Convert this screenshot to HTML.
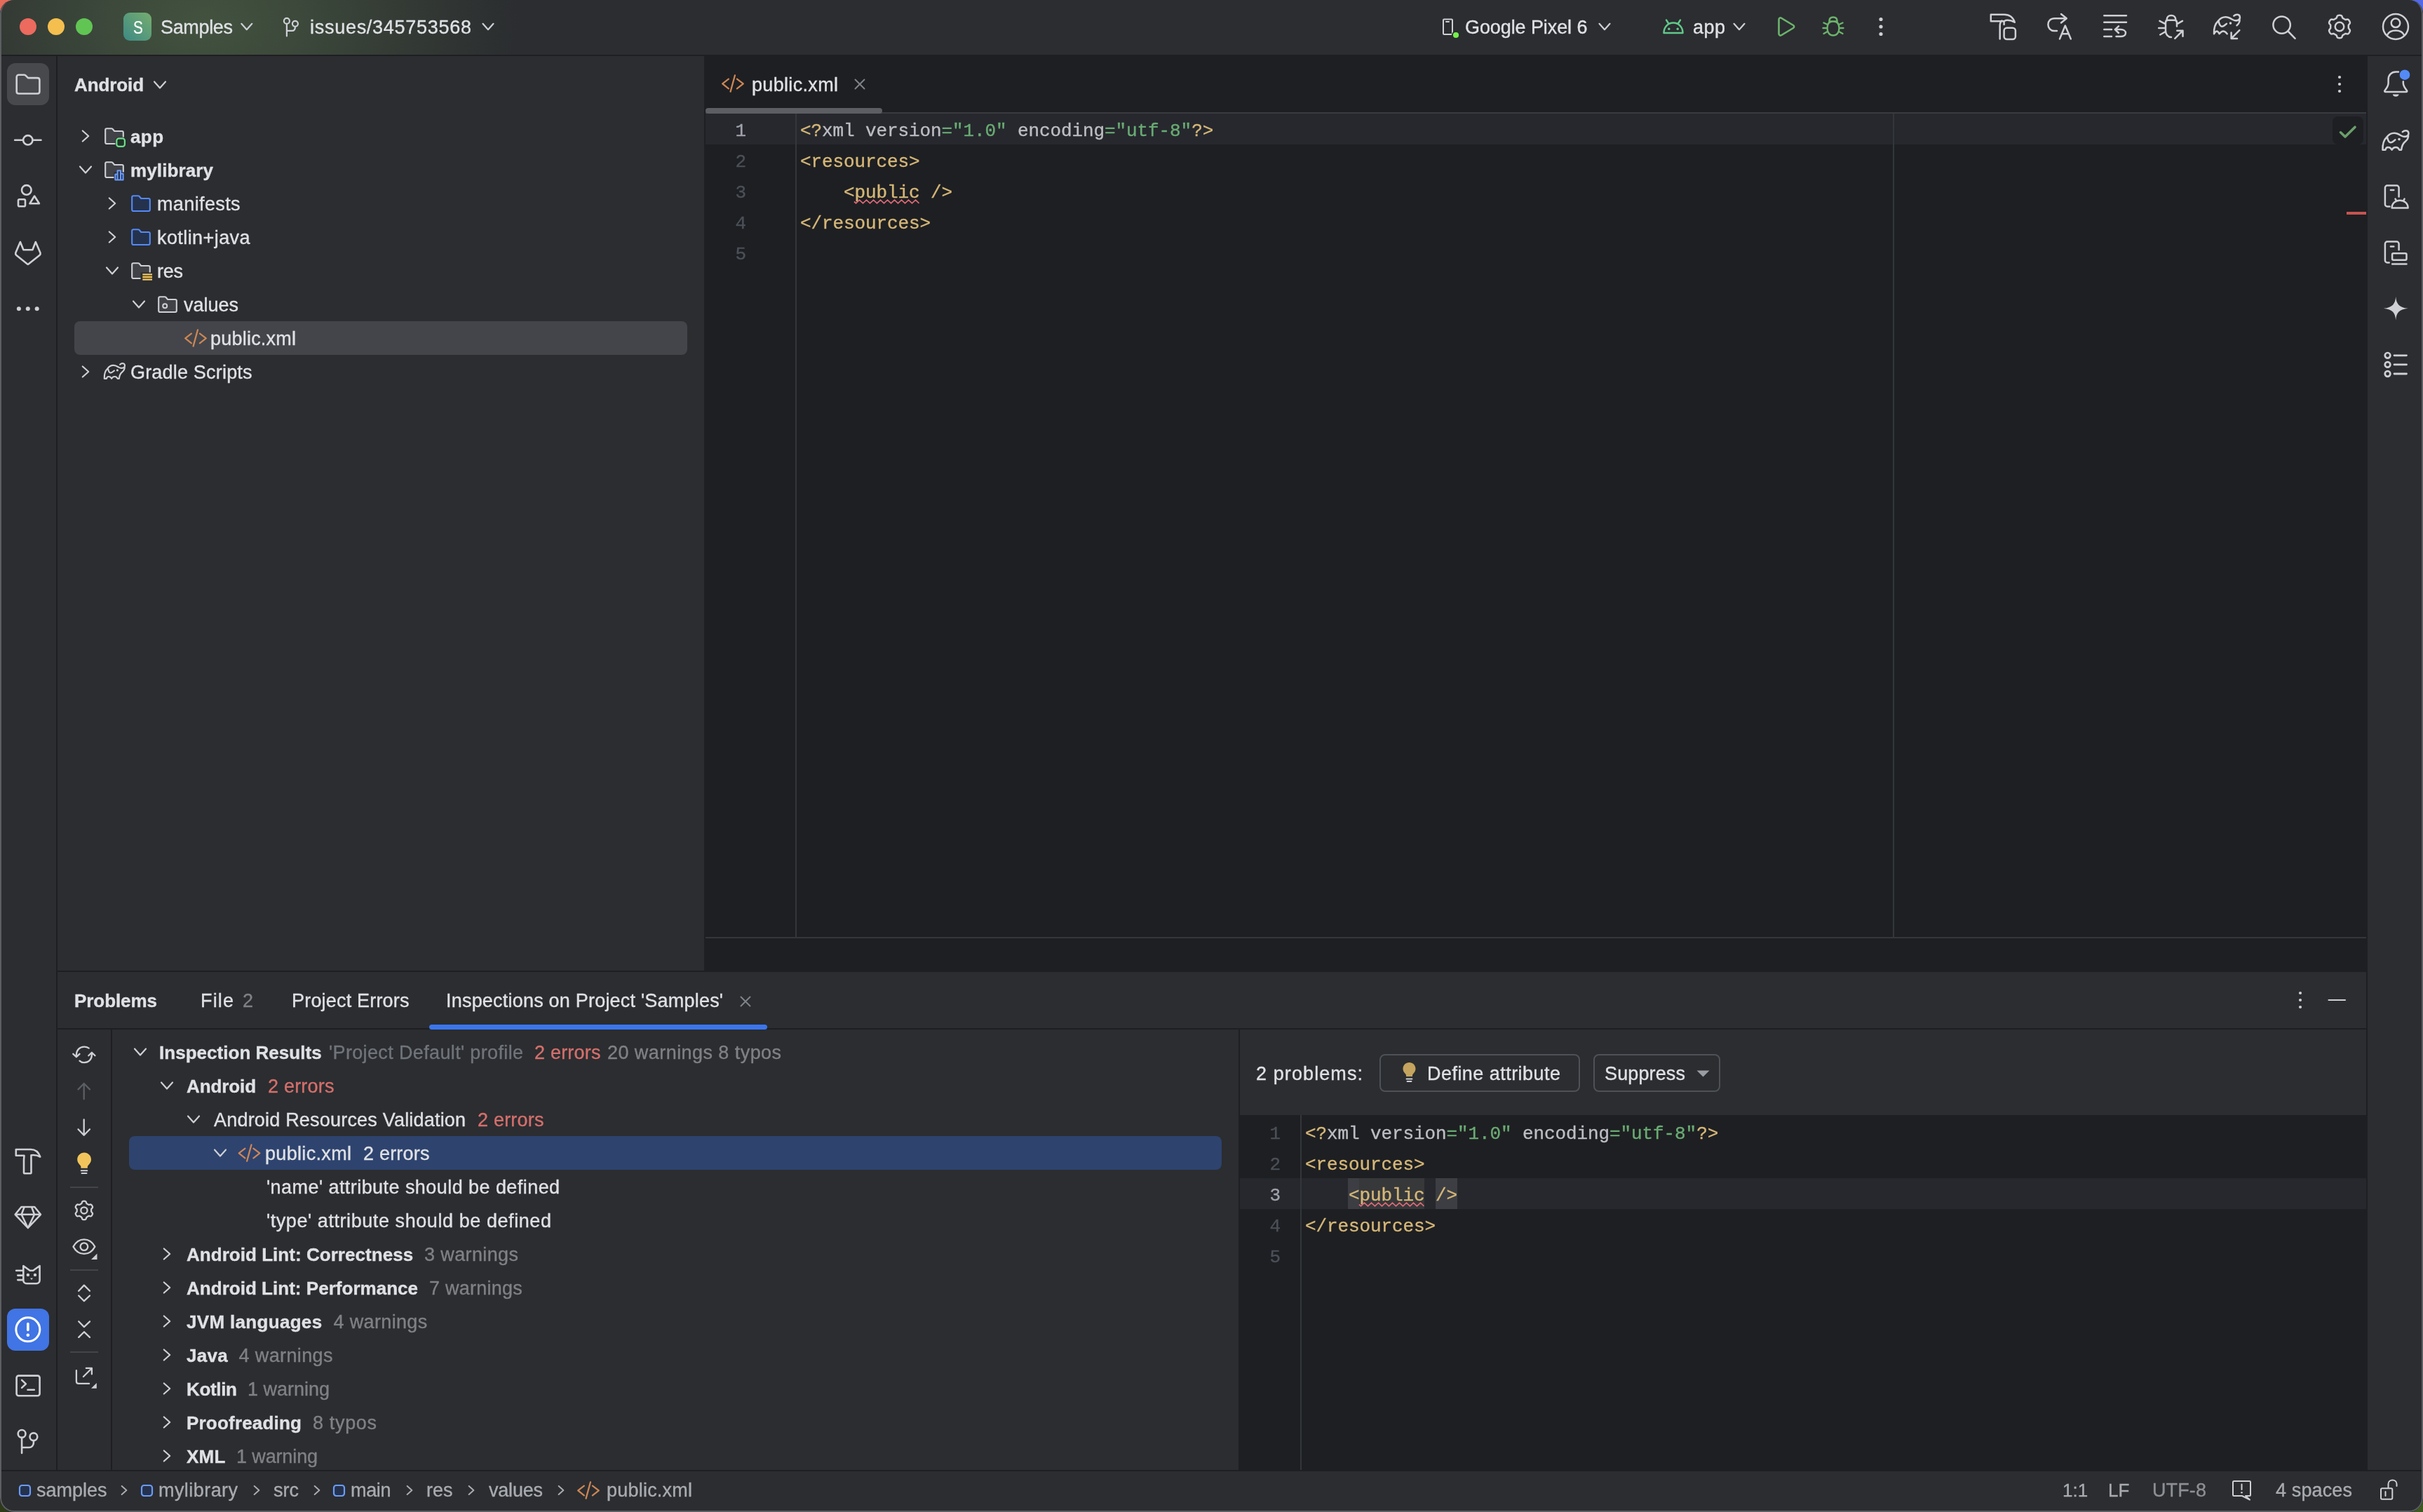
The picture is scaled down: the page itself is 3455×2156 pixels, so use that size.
<!DOCTYPE html>
<html><head><meta charset="utf-8"><style>
html,body{margin:0;padding:0;width:3455px;height:2156px;overflow:hidden;background:#1b1c1f}
.r,.t,.i{position:absolute}
.t{white-space:pre;-webkit-text-stroke:0.35px currentColor}
#w{position:absolute;left:0;top:0;width:3455px;height:2156px;border-radius:20px;overflow:hidden;will-change:transform}
</style></head><body>
<div class="r" style="left:0px;top:0px;width:40px;height:40px;background:#E56B5A;"></div><div class="r" style="left:3415px;top:0px;width:40px;height:40px;background:#5268E6;"></div><div class="r" style="left:0px;top:2116px;width:40px;height:40px;background:#2E3A18;"></div><div class="r" style="left:3415px;top:2116px;width:40px;height:40px;background:#3F5A20;"></div>
<div id="w">
<div class="r" style="left:0px;top:0px;width:3455px;height:2156px;background:#2B2D30;"></div>
<div class="r" style="left:0px;top:0px;width:3455px;height:78px;background:#2B2D30;background:radial-gradient(ellipse 450px 300px at 290px 30px, #43523f 0%, #3c493b 30%, #343b35 62%, #2B2D30 100%);"></div>
<div class="r" style="left:0px;top:78px;width:3455px;height:2px;background:#1E1F22;"></div>
<div class="r" style="left:80px;top:80px;width:2px;height:2016px;background:#1E1F22;"></div>
<div class="r" style="left:82px;top:80px;width:922px;height:1304px;background:#2B2D30;"></div>
<div class="r" style="left:1004px;top:80px;width:2370px;height:1304px;background:#1E1F22;"></div>
<div class="r" style="left:1006px;top:160px;width:2368px;height:2px;background:#393B40;"></div>
<div class="r" style="left:1006px;top:162px;width:2368px;height:44px;background:#26282E;"></div>
<div class="r" style="left:1134px;top:162px;width:2px;height:1174px;background:#33363A;"></div>
<div class="r" style="left:2699px;top:162px;width:2px;height:1174px;background:#33363A;"></div>
<div class="r" style="left:1006px;top:1336px;width:2368px;height:2px;background:#33363A;"></div>
<div class="r" style="left:3374px;top:80px;width:2px;height:2016px;background:#1E1F22;"></div>
<div class="r" style="left:3376px;top:80px;width:79px;height:2016px;background:#2B2D30;"></div>
<div class="r" style="left:82px;top:1384px;width:3292px;height:2px;background:#1E1F22;"></div>
<div class="r" style="left:82px;top:1386px;width:3292px;height:710px;background:#2B2D30;"></div>
<div class="r" style="left:82px;top:1466px;width:3292px;height:2px;background:#1E1F22;"></div>
<div class="r" style="left:158px;top:1468px;width:2px;height:628px;background:#1E1F22;"></div>
<div class="r" style="left:1766px;top:1468px;width:2px;height:628px;background:#1E1F22;"></div>
<div class="r" style="left:1768px;top:1590px;width:1606px;height:506px;background:#1E1F22;"></div>
<div class="r" style="left:1768px;top:1680px;width:1606px;height:44px;background:#26282E;"></div>
<div class="r" style="left:1854px;top:1590px;width:2px;height:506px;background:#33363A;"></div>
<div class="r" style="left:0px;top:2096px;width:3455px;height:2px;background:#1E1F22;"></div>
<div class="r" style="left:0px;top:2098px;width:3455px;height:58px;background:#2B2D30;"></div>
<div class="r" style="left:176px;top:18px;width:40px;height:40px;background:#4f9a7a;border-radius:9px;background:linear-gradient(45deg,#3d8a86,#76ad6e);"></div>
<div class="r" style="left:10px;top:90px;width:60px;height:60px;background:#47494D;border-radius:12px;"></div>
<div class="r" style="left:10px;top:1866px;width:60px;height:60px;background:#4174E4;border-radius:12px;"></div>
<div class="r" style="left:106px;top:458px;width:874px;height:48px;background:#43454A;border-radius:8px;"></div>
<div class="r" style="left:1006px;top:154px;width:252px;height:8px;background:#5C5E63;border-radius:4px;"></div>
<div class="r" style="left:3326px;top:166px;width:44px;height:40px;background:#1E1F22;border-radius:8px;"></div>
<div class="r" style="left:3346px;top:302px;width:28px;height:4px;background:#C75450;"></div>
<div class="r" style="left:612px;top:1461px;width:482px;height:7px;background:#3B76EE;border-radius:3.5px;"></div>
<div class="r" style="left:100px;top:1692px;width:40px;height:2px;background:#43454A;"></div>
<div class="r" style="left:100px;top:1810px;width:40px;height:2px;background:#43454A;"></div>
<div class="r" style="left:100px;top:1927px;width:40px;height:2px;background:#43454A;"></div>
<div class="r" style="left:184px;top:1620px;width:1558px;height:48px;background:#2E436E;border-radius:8px;"></div>
<div class="r" style="left:1967px;top:1503px;width:286px;height:54px;background:transparent;border:2px solid #4E5157;border-radius:8px;box-sizing:border-box;"></div>
<div class="r" style="left:2272px;top:1503px;width:181px;height:54px;background:transparent;border:2px solid #4E5157;border-radius:8px;box-sizing:border-box;"></div>
<div class="r" style="left:1922px;top:1680px;width:16px;height:44px;background:#3C3E43;"></div>
<div class="r" style="left:1938px;top:1680px;width:93px;height:44px;background:#36383A;"></div>
<div class="r" style="left:2047px;top:1680px;width:31px;height:44px;background:#3C3E43;"></div>
<div class="t" style="left:190.0px;top:26px;font:26px/26px 'Liberation Sans',sans-serif;color:#FFFFFF;-webkit-text-stroke:0.2px #fff;transform:scaleX(0.8);transform-origin:left">S</div>
<div class="t" style="left:229.0px;top:26px;font:27px/27px 'Liberation Sans',sans-serif;color:#DFE1E5;letter-spacing:-0.34px;">Samples</div>
<div class="t" style="left:442.0px;top:26px;font:27px/27px 'Liberation Sans',sans-serif;color:#DFE1E5;letter-spacing:0.72px;">issues/345753568</div>
<div class="t" style="left:2089.0px;top:26px;font:27px/27px 'Liberation Sans',sans-serif;color:#DFE1E5;letter-spacing:-0.09px;">Google Pixel 6</div>
<div class="t" style="left:2414.0px;top:26px;font:27px/27px 'Liberation Sans',sans-serif;color:#DFE1E5;letter-spacing:0.48px;">app</div>
<div class="t" style="left:106.0px;top:108px;font:bold 26px/26px 'Liberation Sans',sans-serif;color:#DFE1E5;letter-spacing:-0.10px;">Android</div>
<div class="t" style="left:186.0px;top:182px;font:bold 26px/26px 'Liberation Sans',sans-serif;color:#DFE1E5;letter-spacing:0.40px;">app</div>
<div class="t" style="left:186.0px;top:230px;font:bold 26px/26px 'Liberation Sans',sans-serif;color:#DFE1E5;letter-spacing:0.12px;">mylibrary</div>
<div class="t" style="left:224.0px;top:278px;font:27px/27px 'Liberation Sans',sans-serif;color:#DFE1E5;letter-spacing:0.38px;">manifests</div>
<div class="t" style="left:224.0px;top:326px;font:27px/27px 'Liberation Sans',sans-serif;color:#DFE1E5;letter-spacing:0.42px;">kotlin+java</div>
<div class="t" style="left:224.0px;top:374px;font:27px/27px 'Liberation Sans',sans-serif;color:#DFE1E5;letter-spacing:-0.25px;">res</div>
<div class="t" style="left:262.0px;top:422px;font:27px/27px 'Liberation Sans',sans-serif;color:#DFE1E5;">values</div>
<div class="t" style="left:300.0px;top:470px;font:27px/27px 'Liberation Sans',sans-serif;color:#DFE1E5;letter-spacing:0.22px;">public.xml</div>
<div class="t" style="left:186.0px;top:518px;font:27px/27px 'Liberation Sans',sans-serif;color:#DFE1E5;letter-spacing:0.19px;">Gradle Scripts</div>
<div class="t" style="left:1072.0px;top:108px;font:27px/27px 'Liberation Sans',sans-serif;color:#DFE1E5;letter-spacing:0.33px;">public.xml</div>
<div class="t" style="left:1141px;top:174px;font:26px/26px 'Liberation Mono',monospace;letter-spacing:-0.1px"><span style="color:#D5B778">&lt;?</span><span style="color:#BCBEC4">xml version</span><span style="color:#6AAB73">="1.0"</span><span style="color:#BCBEC4"> encoding</span><span style="color:#6AAB73">="utf-8"</span><span style="color:#D5B778">?&gt;</span></div>
<div class="t" style="left:1000px;width:64px;text-align:right;top:174px;font:26px/26px 'Liberation Mono',monospace;color:#A1A3AB">1</div>
<div class="t" style="left:1141px;top:218px;font:26px/26px 'Liberation Mono',monospace;letter-spacing:-0.1px"><span style="color:#D5B778">&lt;resources&gt;</span></div>
<div class="t" style="left:1000px;width:64px;text-align:right;top:218px;font:26px/26px 'Liberation Mono',monospace;color:#4B5059">2</div>
<div class="t" style="left:1141px;top:262px;font:26px/26px 'Liberation Mono',monospace;letter-spacing:-0.1px"><span style="color:#D5B778">    &lt;public /&gt;</span></div>
<div class="t" style="left:1000px;width:64px;text-align:right;top:262px;font:26px/26px 'Liberation Mono',monospace;color:#4B5059">3</div>
<div class="t" style="left:1141px;top:306px;font:26px/26px 'Liberation Mono',monospace;letter-spacing:-0.1px"><span style="color:#D5B778">&lt;/resources&gt;</span></div>
<div class="t" style="left:1000px;width:64px;text-align:right;top:306px;font:26px/26px 'Liberation Mono',monospace;color:#4B5059">4</div>
<div class="t" style="left:1141px;top:350px;font:26px/26px 'Liberation Mono',monospace;letter-spacing:-0.1px"></div>
<div class="t" style="left:1000px;width:64px;text-align:right;top:350px;font:26px/26px 'Liberation Mono',monospace;color:#4B5059">5</div>
<div class="t" style="left:106.0px;top:1414px;font:bold 26px/26px 'Liberation Sans',sans-serif;color:#DFE1E5;letter-spacing:-0.07px;">Problems</div>
<div class="t" style="left:286.0px;top:1414px;font:27px/27px 'Liberation Sans',sans-serif;color:#DFE1E5;letter-spacing:1.16px;">File</div>
<div class="t" style="left:346.0px;top:1414px;font:27px/27px 'Liberation Sans',sans-serif;color:#7F8184;">2</div>
<div class="t" style="left:416.0px;top:1414px;font:27px/27px 'Liberation Sans',sans-serif;color:#DFE1E5;letter-spacing:0.19px;">Project Errors</div>
<div class="t" style="left:636.0px;top:1414px;font:27px/27px 'Liberation Sans',sans-serif;color:#DFE1E5;letter-spacing:0.21px;">Inspections on Project 'Samples'</div>
<div class="t" style="left:227.0px;top:1488px;font:bold 26px/26px 'Liberation Sans',sans-serif;color:#DFE1E5;letter-spacing:0.03px;">Inspection Results</div>
<div class="t" style="left:469.0px;top:1488px;font:27px/27px 'Liberation Sans',sans-serif;color:#70747B;letter-spacing:0.36px;">'Project Default' profile</div>
<div class="t" style="left:762.0px;top:1488px;font:27px/27px 'Liberation Sans',sans-serif;color:#D46F6C;letter-spacing:0.21px;">2 errors</div>
<div class="t" style="left:866.0px;top:1488px;font:27px/27px 'Liberation Sans',sans-serif;color:#7F8184;letter-spacing:0.44px;">20 warnings 8 typos</div>
<div class="t" style="left:266.0px;top:1536px;font:bold 26px/26px 'Liberation Sans',sans-serif;color:#DFE1E5;letter-spacing:-0.10px;">Android</div>
<div class="t" style="left:382.0px;top:1536px;font:27px/27px 'Liberation Sans',sans-serif;color:#D46F6C;letter-spacing:0.21px;">2 errors</div>
<div class="t" style="left:305.0px;top:1584px;font:27px/27px 'Liberation Sans',sans-serif;color:#DFE1E5;letter-spacing:0.20px;">Android Resources Validation</div>
<div class="t" style="left:681.0px;top:1584px;font:27px/27px 'Liberation Sans',sans-serif;color:#D46F6C;letter-spacing:0.21px;">2 errors</div>
<div class="t" style="left:378.0px;top:1632px;font:27px/27px 'Liberation Sans',sans-serif;color:#DFE1E5;letter-spacing:0.33px;">public.xml</div>
<div class="t" style="left:518.0px;top:1632px;font:27px/27px 'Liberation Sans',sans-serif;color:#DFE1E5;letter-spacing:0.21px;">2 errors</div>
<div class="t" style="left:380.0px;top:1680px;font:27px/27px 'Liberation Sans',sans-serif;color:#DFE1E5;letter-spacing:0.44px;">'name' attribute should be defined</div>
<div class="t" style="left:380.0px;top:1728px;font:27px/27px 'Liberation Sans',sans-serif;color:#DFE1E5;letter-spacing:0.57px;">'type' attribute should be defined</div>
<div class="t" style="left:266.0px;top:1776px;font:bold 26px/26px 'Liberation Sans',sans-serif;color:#DFE1E5;letter-spacing:0.04px;">Android Lint: Correctness</div>
<div class="t" style="left:605.0px;top:1776px;font:27px/27px 'Liberation Sans',sans-serif;color:#7F8184;letter-spacing:0.38px;">3 warnings</div>
<div class="t" style="left:266.0px;top:1824px;font:bold 26px/26px 'Liberation Sans',sans-serif;color:#DFE1E5;letter-spacing:0.03px;">Android Lint: Performance</div>
<div class="t" style="left:612.0px;top:1824px;font:27px/27px 'Liberation Sans',sans-serif;color:#7F8184;letter-spacing:0.24px;">7 warnings</div>
<div class="t" style="left:266.0px;top:1872px;font:bold 26px/26px 'Liberation Sans',sans-serif;color:#DFE1E5;letter-spacing:0.32px;">JVM languages</div>
<div class="t" style="left:475.5px;top:1872px;font:27px/27px 'Liberation Sans',sans-serif;color:#7F8184;letter-spacing:0.35px;">4 warnings</div>
<div class="t" style="left:266.0px;top:1920px;font:bold 26px/26px 'Liberation Sans',sans-serif;color:#DFE1E5;letter-spacing:0.26px;">Java</div>
<div class="t" style="left:340.5px;top:1920px;font:27px/27px 'Liberation Sans',sans-serif;color:#7F8184;letter-spacing:0.38px;">4 warnings</div>
<div class="t" style="left:266.0px;top:1968px;font:bold 26px/26px 'Liberation Sans',sans-serif;color:#DFE1E5;letter-spacing:-0.33px;">Kotlin</div>
<div class="t" style="left:353.0px;top:1968px;font:27px/27px 'Liberation Sans',sans-serif;color:#7F8184;">1 warning</div>
<div class="t" style="left:266.0px;top:2016px;font:bold 26px/26px 'Liberation Sans',sans-serif;color:#DFE1E5;letter-spacing:0.20px;">Proofreading</div>
<div class="t" style="left:446.0px;top:2016px;font:27px/27px 'Liberation Sans',sans-serif;color:#7F8184;letter-spacing:0.66px;">8 typos</div>
<div class="t" style="left:266.0px;top:2064px;font:bold 26px/26px 'Liberation Sans',sans-serif;color:#DFE1E5;letter-spacing:0.26px;">XML</div>
<div class="t" style="left:337.0px;top:2064px;font:27px/27px 'Liberation Sans',sans-serif;color:#7F8184;letter-spacing:-0.13px;">1 warning</div>
<div class="t" style="left:1791.0px;top:1518px;font:27px/27px 'Liberation Sans',sans-serif;color:#DFE1E5;letter-spacing:1.10px;">2 problems:</div>
<div class="t" style="left:2035.0px;top:1518px;font:27px/27px 'Liberation Sans',sans-serif;color:#DFE1E5;letter-spacing:0.46px;">Define attribute</div>
<div class="t" style="left:2288.0px;top:1518px;font:27px/27px 'Liberation Sans',sans-serif;color:#DFE1E5;letter-spacing:0.13px;">Suppress</div>
<div class="t" style="left:1861px;top:1604px;font:26px/26px 'Liberation Mono',monospace;letter-spacing:-0.1px"><span style="color:#D5B778">&lt;?</span><span style="color:#BCBEC4">xml version</span><span style="color:#6AAB73">="1.0"</span><span style="color:#BCBEC4"> encoding</span><span style="color:#6AAB73">="utf-8"</span><span style="color:#D5B778">?&gt;</span></div>
<div class="t" style="left:1760px;width:66px;text-align:right;top:1604px;font:26px/26px 'Liberation Mono',monospace;color:#4B5059">1</div>
<div class="t" style="left:1861px;top:1648px;font:26px/26px 'Liberation Mono',monospace;letter-spacing:-0.1px"><span style="color:#D5B778">&lt;resources&gt;</span></div>
<div class="t" style="left:1760px;width:66px;text-align:right;top:1648px;font:26px/26px 'Liberation Mono',monospace;color:#4B5059">2</div>
<div class="t" style="left:1760px;width:66px;text-align:right;top:1692px;font:26px/26px 'Liberation Mono',monospace;color:#A1A3AB">3</div>
<div class="t" style="left:1861px;top:1736px;font:26px/26px 'Liberation Mono',monospace;letter-spacing:-0.1px"><span style="color:#D5B778">&lt;/resources&gt;</span></div>
<div class="t" style="left:1760px;width:66px;text-align:right;top:1736px;font:26px/26px 'Liberation Mono',monospace;color:#4B5059">4</div>
<div class="t" style="left:1861px;top:1780px;font:26px/26px 'Liberation Mono',monospace;letter-spacing:-0.1px"></div>
<div class="t" style="left:1760px;width:66px;text-align:right;top:1780px;font:26px/26px 'Liberation Mono',monospace;color:#4B5059">5</div>
<div class="t" style="left:1861px;top:1692px;font:26px/26px 'Liberation Mono',monospace;letter-spacing:-0.1px"><span style="color:#D5B778">    &lt;public /&gt;</span></div>
<div class="t" style="left:52.0px;top:2112px;font:27px/27px 'Liberation Sans',sans-serif;color:#A8ABB0;">samples</div>
<div class="t" style="left:226.0px;top:2112px;font:27px/27px 'Liberation Sans',sans-serif;color:#A8ABB0;letter-spacing:0.44px;">mylibrary</div>
<div class="t" style="left:390.0px;top:2112px;font:27px/27px 'Liberation Sans',sans-serif;color:#A8ABB0;">src</div>
<div class="t" style="left:500.0px;top:2112px;font:27px/27px 'Liberation Sans',sans-serif;color:#A8ABB0;letter-spacing:-0.34px;">main</div>
<div class="t" style="left:608.0px;top:2112px;font:27px/27px 'Liberation Sans',sans-serif;color:#A8ABB0;">res</div>
<div class="t" style="left:697.0px;top:2112px;font:27px/27px 'Liberation Sans',sans-serif;color:#A8ABB0;letter-spacing:-0.21px;">values</div>
<div class="t" style="left:865.0px;top:2112px;font:27px/27px 'Liberation Sans',sans-serif;color:#A8ABB0;letter-spacing:0.22px;">public.xml</div>
<div class="t" style="left:2941.0px;top:2112px;font:26px/26px 'Liberation Sans',sans-serif;color:#A8ABB0;">1:1</div>
<div class="t" style="left:3006.0px;top:2112px;font:26px/26px 'Liberation Sans',sans-serif;color:#A8ABB0;">LF</div>
<div class="t" style="left:3069.0px;top:2112px;font:27px/27px 'Liberation Sans',sans-serif;color:#8C8F94;letter-spacing:0.12px;">UTF-8</div>
<div class="t" style="left:3245.0px;top:2112px;font:27px/27px 'Liberation Sans',sans-serif;color:#A8ABB0;letter-spacing:0.13px;">4 spaces</div>
<svg class="i" style="left:0;top:0" width="3455" height="2156" viewBox="0 0 3455 2156" fill="none">
<circle cx="40" cy="38" r="12" fill="#EC6A5E"/>
<circle cx="80" cy="38" r="12" fill="#F4BF4F"/>
<circle cx="120" cy="38" r="12" fill="#61C554"/>
<defs><linearGradient id="sg" x1="0" y1="1" x2="1" y2="0"><stop offset="0" stop-color="#3d8a86"/><stop offset="1" stop-color="#76ad6e"/></linearGradient></defs>
<path d="M344.30 33.80 L351.80 42.20 L359.30 33.80" stroke="#CED0D6" stroke-width="2.2" stroke-linecap="round" stroke-linejoin="round" fill="none"/>
<circle cx="408.9" cy="29.9" r="4" stroke="#CED0D6" stroke-width="2.2" fill="none"/><circle cx="420.9" cy="33.8" r="4" stroke="#CED0D6" stroke-width="2.2" fill="none"/><path d="M408.9 34.2 V51.5 M408.9 43.9 H416.5 C419 43.9 420.9 42 420.9 38.2" stroke="#CED0D6" stroke-width="2.2" stroke-linecap="round" stroke-linejoin="round" fill="none"/>
<path d="M688.50 33.80 L696.00 42.20 L703.50 33.80" stroke="#CED0D6" stroke-width="2.2" stroke-linecap="round" stroke-linejoin="round" fill="none"/>
<path d="M2058 28.8 C2058 28 2058.5 27.5 2059.3 27.5 H2069.7 C2070.5 27.5 2071 28 2071 28.8 V47.7 C2071 48.5 2070.5 49 2069.7 49 H2059.3 C2058.5 49 2058 48.5 2058 47.7 Z M2062 31 H2066" stroke="#CED0D6" stroke-width="2.0" stroke-linecap="round" stroke-linejoin="round" fill="none"/>
<circle cx="2076" cy="50" r="6" fill="#2B2D30"/><circle cx="2076" cy="50" r="4.1" fill="#74F04C"/>
<path d="M2280.50 33.80 L2288.00 42.20 L2295.50 33.80" stroke="#CED0D6" stroke-width="2.2" stroke-linecap="round" stroke-linejoin="round" fill="none"/>
<path d="M2372.5 47 C2372.5 38.5 2378.5 32.5 2386 32.5 C2393.5 32.5 2399.5 38.5 2399.5 47 Z M2376 28.5 L2379.5 34 M2396 28.5 L2392.5 34" stroke="#62C98A" stroke-width="2.4" stroke-linecap="round" stroke-linejoin="round" fill="none"/><circle cx="2379.8" cy="41.3" r="1.7" fill="#62C98A"/><circle cx="2392.2" cy="41.3" r="1.7" fill="#62C98A"/>
<path d="M2472.50 33.80 L2480.00 42.20 L2487.50 33.80" stroke="#CED0D6" stroke-width="2.2" stroke-linecap="round" stroke-linejoin="round" fill="none"/>
<path d="M2536.5 28 C2536.5 25.5 2538.5 24.8 2540.5 26 L2557 36 C2558.6 37 2558.6 39 2557 40 L2540.5 50 C2538.5 51.2 2536.5 50.5 2536.5 48 Z" stroke="#6DB36D" stroke-width="2.6" stroke-linecap="round" stroke-linejoin="round" fill="none"/>
<path d="M2608.3 30.5 C2608.3 26.5 2610.5 24.5 2614 24.5 C2617.5 24.5 2619.7 26.5 2619.7 30.5 Z M2605.5 40 C2605.5 33.5 2609 30.5 2614 30.5 C2619 30.5 2622.5 33.5 2622.5 40 C2622.5 46.5 2619 50.5 2614 50.5 C2609 50.5 2605.5 46.5 2605.5 40 Z M2600.5 32.5 L2605.8 35 M2599.5 40 H2605.5 M2600.5 48 L2605.8 45 M2627.5 32.5 L2622.2 35 M2628.5 40 H2622.5 M2627.5 48 L2622.2 45" stroke="#6DB36D" stroke-width="2.4" stroke-linecap="round" stroke-linejoin="round" fill="none"/>
<circle cx="2682" cy="27.5" r="2.6" fill="#CED0D6"/><circle cx="2682" cy="38" r="2.6" fill="#CED0D6"/><circle cx="2682" cy="48.5" r="2.6" fill="#CED0D6"/>
<g transform="translate(2836 18) scale(1.0)"><path d="M2.8 2.8 H22 C29 2.8 34.5 7 36.8 13.8 C33 11.5 28.5 10.3 24 11 L21.6 12.3 H2.8 Z M21.6 12.3 V17" stroke="#CED0D6" stroke-width="2.5" stroke-linecap="round" stroke-linejoin="round" fill="none"/><path d="M18.5 11.5 C16.5 13 15.7 15.5 15.7 19 V37.5" stroke="#CED0D6" stroke-width="2.5" stroke-linecap="round" stroke-linejoin="round" fill="none"/><rect x="21.6" y="21.7" width="16.3" height="16.3" rx="4" stroke="#CED0D6" stroke-width="2.5" fill="none"/></g>
<g transform="translate(2916 18) scale(1.0)"><path d="M13.6 8.2 H30.5 M23 2 L30.8 8.2 L23 14.5 M13.6 8.2 C8 8.2 4.4 12 4.4 17 C4.4 22 8 26 13 26 H17" stroke="#CED0D6" stroke-width="2.5" stroke-linecap="round" stroke-linejoin="round" fill="none"/><path d="M21 37.5 L28.8 18.6 L36.8 37.5 M23.8 30.3 H33.8" stroke="#CED0D6" stroke-width="2.5" stroke-linecap="round" stroke-linejoin="round" fill="none"/></g>
<g transform="translate(2996 18) scale(1.0)"><path d="M4.3 4.2 H36 M4.3 13.8 H36 M4.3 24.1 H15 M4.3 34 H15 M21.5 34 H28 C32 34 35 32 35 29 C35 26 32 24.1 28 24.1 H19.8 M25 19.3 L19.8 24.1 L25 29" stroke="#CED0D6" stroke-width="2.5" stroke-linecap="round" stroke-linejoin="round" fill="none"/></g>
<g transform="translate(3076 18) scale(1.0)"><path d="M13.6 10.5 C13.6 6.5 16.2 4 20 4 C23.8 4 26.4 6.5 26.4 10.5 M28 19.5 V14 C28 12 26.5 10.8 24.5 10.8 H15.5 C13.5 10.8 12 12 12 14 V26 C12 31 15.5 35 20 35 M3.5 11.8 L12 16.3 M2.2 22 H12 M4.2 31.5 L12 27 M36 11.8 L28 16.3 M25.3 36.9 L36.5 25.7 M28.3 25.7 H36.5 V33.8" stroke="#CED0D6" stroke-width="2.5" stroke-linecap="round" stroke-linejoin="round" fill="none"/></g>
<g transform="translate(3156 18) scale(1.0)"><g transform="translate(-0.5 -3.5) scale(1.0)"><path d="M1.5 33.7 C1.2 26 3 19.5 7.4 15.5 C10 12 13.5 9.8 18 9.8 C22 9.8 25 11.8 28 13.5 C31 15 35 15.5 37.5 13 C39.5 10.5 38.5 6.3 34.5 6.3 C32 6.3 30.5 7.5 29.8 8.2 M38 12.5 C38.5 16.5 36.8 19.5 34 21.8 M20.2 33.7 C18 31 16 30.1 14.6 30.1 C13 30.1 11.5 31 9.1 33.7 C7.5 31 6.5 30.1 5.5 30.1 C4 30.1 3 31.5 1.5 33.7 M7.9 14.8 C8.5 18.5 9.5 23 12.7 23.3 C15 23.5 17.5 21 19.4 19.4" stroke="#CED0D6" stroke-width="2.5" stroke-linecap="round" stroke-linejoin="round" fill="none"/><circle cx="25" cy="18.6" r="1.8" fill="#CED0D6"/></g><path d="M37.3 25.2 L25.6 36.9 M25.6 28.4 V36.9 H34" stroke="#CED0D6" stroke-width="2.5" stroke-linecap="round" stroke-linejoin="round" fill="none"/></g>
<g transform="translate(3236 18) scale(1.0)"><circle cx="17.6" cy="17.6" r="12.2" stroke="#CED0D6" stroke-width="2.5" fill="none"/><path d="M26.5 26.5 L36.6 36.8" stroke="#CED0D6" stroke-width="2.5" stroke-linecap="round" stroke-linejoin="round" fill="none"/></g>
<path d="M3348.80 38.00 L3348.79 38.56 L3348.78 39.12 L3348.80 39.68 L3348.91 40.28 L3349.28 40.94 L3350.01 41.75 L3350.68 42.63 L3350.94 43.44 L3350.87 44.16 L3350.65 44.83 L3350.36 45.48 L3350.03 46.10 L3349.66 46.70 L3349.24 47.27 L3348.77 47.80 L3348.18 48.22 L3347.35 48.40 L3346.25 48.25 L3345.19 48.03 L3344.42 48.04 L3343.86 48.24 L3343.36 48.51 L3342.88 48.80 L3342.40 49.09 L3341.91 49.36 L3341.42 49.63 L3340.94 49.92 L3340.48 50.31 L3340.09 50.97 L3339.75 52.01 L3339.33 53.03 L3338.76 53.65 L3338.10 53.96 L3337.41 54.11 L3336.71 54.18 L3336.00 54.20 L3335.29 54.18 L3334.59 54.11 L3333.90 53.96 L3333.24 53.65 L3332.67 53.03 L3332.25 52.01 L3331.91 50.97 L3331.52 50.31 L3331.06 49.92 L3330.58 49.63 L3330.09 49.36 L3329.60 49.09 L3329.12 48.80 L3328.64 48.51 L3328.14 48.24 L3327.58 48.04 L3326.81 48.03 L3325.75 48.25 L3324.65 48.40 L3323.82 48.22 L3323.23 47.80 L3322.76 47.27 L3322.34 46.70 L3321.97 46.10 L3321.64 45.48 L3321.35 44.83 L3321.13 44.16 L3321.06 43.44 L3321.32 42.63 L3321.99 41.75 L3322.72 40.94 L3323.09 40.28 L3323.20 39.68 L3323.22 39.12 L3323.21 38.56 L3323.20 38.00 L3323.21 37.44 L3323.22 36.88 L3323.20 36.32 L3323.09 35.72 L3322.72 35.06 L3321.99 34.25 L3321.32 33.37 L3321.06 32.56 L3321.13 31.84 L3321.35 31.17 L3321.64 30.52 L3321.97 29.90 L3322.34 29.30 L3322.76 28.73 L3323.23 28.20 L3323.82 27.78 L3324.65 27.60 L3325.75 27.75 L3326.81 27.97 L3327.58 27.96 L3328.14 27.76 L3328.64 27.49 L3329.12 27.20 L3329.60 26.91 L3330.09 26.64 L3330.58 26.37 L3331.06 26.08 L3331.52 25.69 L3331.91 25.03 L3332.25 23.99 L3332.67 22.97 L3333.24 22.35 L3333.90 22.04 L3334.59 21.89 L3335.29 21.82 L3336.00 21.80 L3336.71 21.82 L3337.41 21.89 L3338.10 22.04 L3338.76 22.35 L3339.33 22.97 L3339.75 23.99 L3340.09 25.03 L3340.48 25.69 L3340.94 26.08 L3341.42 26.37 L3341.91 26.64 L3342.40 26.91 L3342.88 27.20 L3343.36 27.49 L3343.86 27.76 L3344.42 27.96 L3345.19 27.97 L3346.25 27.75 L3347.35 27.60 L3348.18 27.78 L3348.77 28.20 L3349.24 28.73 L3349.66 29.30 L3350.03 29.90 L3350.36 30.52 L3350.65 31.17 L3350.87 31.84 L3350.94 32.56 L3350.68 33.37 L3350.01 34.25 L3349.28 35.06 L3348.91 35.72 L3348.80 36.32 L3348.78 36.88 L3348.79 37.44 L3348.80 38.00 Z" stroke="#CED0D6" stroke-width="2.5" stroke-linecap="round" stroke-linejoin="round" fill="none"/><circle cx="3336" cy="38" r="6.3" stroke="#CED0D6" stroke-width="2.5" fill="none"/>
<g transform="translate(3396 18) scale(1.0)"><circle cx="20" cy="20" r="18" stroke="#CED0D6" stroke-width="2.5" fill="none"/><circle cx="20" cy="14.8" r="6.3" stroke="#CED0D6" stroke-width="2.5" fill="none"/><path d="M7.8 32.2 C10 27.8 14.5 25.6 20 25.6 C25.5 25.6 30 27.8 32.2 32.2" stroke="#CED0D6" stroke-width="2.5" stroke-linecap="round" stroke-linejoin="round" fill="none"/></g>
<g transform="translate(20 100) scale(1.0)"><path d="M3.7 9.8 C3.7 8.1 5 6.8 6.7 6.8 H14.5 C15.2 6.8 15.8 7 16.3 7.4 L20 11.1 H33.4 C35.1 11.1 36.4 12.4 36.4 14.1 V30.5 C36.4 32.2 35.1 33.5 33.4 33.5 H6.7 C5 33.5 3.7 32.2 3.7 30.5 Z" stroke="#CED0D6" stroke-width="2.6" stroke-linecap="round" stroke-linejoin="round" fill="none"/></g>
<g transform="translate(20 180) scale(1.0)"><circle cx="19.8" cy="19.8" r="6.7" stroke="#CED0D6" stroke-width="2.6" fill="none"/><path d="M1.2 19.8 H12.6 M27 19.8 H38.5" stroke="#CED0D6" stroke-width="2.6" stroke-linecap="round" stroke-linejoin="round" fill="none"/></g>
<g transform="translate(20 260) scale(1.0)"><circle cx="17.8" cy="10.9" r="6.8" stroke="#CED0D6" stroke-width="2.6" fill="none"/><rect x="6" y="24.3" width="10" height="10" rx="1.8" stroke="#CED0D6" stroke-width="2.6" fill="none"/><path d="M29.1 19.5 L22.5 30.3 H35.9 Z" stroke="#CED0D6" stroke-width="2.6" stroke-linecap="round" stroke-linejoin="round" fill="none"/></g>
<g transform="translate(20 340) scale(1.0)"><path d="M8.9 5 L13.4 16.2 H26.4 L30.8 5 L37.5 20.5 C37.9 21.8 37.5 23 36.4 23.9 L20.6 36.6 C20.1 37 19.5 37 19 36.6 L3.4 23.9 C2.3 23 1.9 21.8 2.3 20.5 Z" stroke="#CED0D6" stroke-width="2.6" stroke-linecap="round" stroke-linejoin="round" fill="none"/></g>
<g transform="translate(20 420) scale(1.0)"><circle cx="6.9" cy="20.2" r="3" fill="#CED0D6"/><circle cx="19.8" cy="20.2" r="3" fill="#CED0D6"/><circle cx="32.7" cy="20.2" r="3" fill="#CED0D6"/></g>
<g transform="translate(20 1636) scale(1.0)"><path d="M2.8 3 H24 C30.5 3 35 7 37.3 13.5 C34 11.6 30 10.6 24.5 11.2 C24.3 14 24.5 16.5 24.5 19 V36.2 C24.5 36.8 24.1 37.2 23.5 37.2 H15 C14.4 37.2 14 36.8 14 36.2 V19 C14 16.5 14.3 14 14.5 11.8 H2.8 Z" stroke="#CED0D6" stroke-width="2.6" stroke-linecap="round" stroke-linejoin="round" fill="none"/></g>
<g transform="translate(20 1716) scale(1.0)"><path d="M10.4 5 H29.3 L38 15.8 L19.85 35 L1.65 15.8 Z M1.65 15.8 H38 M14.7 5 L10.6 15.8 L19.85 35 L29.1 15.8 L25 5" stroke="#CED0D6" stroke-width="2.5" stroke-linecap="round" stroke-linejoin="round" fill="none"/></g>
<g transform="translate(20 1796) scale(1.0)"><path d="M13.3 9 V29.5 C13.3 32.2 15.3 34.2 18 34.2 H31.9 C34.6 34.2 36.6 32.2 36.6 29.5 V9 L27.2 15.8 H22.7 Z M3.1 15.7 H12.6 M5.3 22.6 H12.6 M5.3 29.1 H12.6" stroke="#CED0D6" stroke-width="2.6" stroke-linecap="round" stroke-linejoin="round" fill="none"/><circle cx="19.9" cy="21.9" r="2.2" fill="#CED0D6"/><circle cx="30" cy="21.9" r="2.2" fill="#CED0D6"/><path d="M23 26.5 H27 L25 29 Z" fill="#CED0D6"/></g>
<circle cx="39.85" cy="1895.85" r="17" stroke="#FFFFFF" stroke-width="3.0" fill="none"/><path d="M39.85 1887.5 V1896.5" stroke="#FFFFFF" stroke-width="3.6" stroke-linecap="round" stroke-linejoin="round" fill="none"/><circle cx="39.85" cy="1903.8" r="2.3" fill="#FFFFFF"/>
<g transform="translate(20 1956) scale(1.0)"><rect x="3.6" y="5.6" width="33" height="28.7" rx="3" stroke="#CED0D6" stroke-width="2.6" fill="none"/><path d="M11.1 11.9 L16.9 17.4 L11.1 22.9 M19.5 25.8 H28.8" stroke="#CED0D6" stroke-width="2.6" stroke-linecap="round" stroke-linejoin="round" fill="none"/></g>
<g transform="translate(20 2036) scale(1.0)"><circle cx="11.1" cy="8.4" r="5.4" stroke="#CED0D6" stroke-width="2.6" fill="none"/><circle cx="27.9" cy="12.75" r="5.4" stroke="#CED0D6" stroke-width="2.6" fill="none"/><path d="M11.1 14 V36 M11.1 28 H21.5 C25 28 27.9 25 27.9 21.5 V18.3" stroke="#CED0D6" stroke-width="2.6" stroke-linecap="round" stroke-linejoin="round" fill="none"/></g>
<path d="M220.00 116.52 L228.00 125.48 L236.00 116.52" stroke="#CED0D6" stroke-width="2.2" stroke-linecap="round" stroke-linejoin="round" fill="none"/>
<path d="M117.80 186.50 L126.20 194.00 L117.80 201.50" stroke="#CED0D6" stroke-width="2.2" stroke-linecap="round" stroke-linejoin="round" fill="none"/>
<g transform="translate(149 178) scale(1.0)"><path d="M1.2 7.2 C1.2 6 2 5.2 3.2 5.2 H10 C10.6 5.2 11 5.4 11.4 5.8 L14.2 9 H24.8 C26 9 26.8 9.8 26.8 11 V25 C26.8 26.2 26 27 24.8 27 H3.2 C2 27 1.2 26.2 1.2 25 Z" stroke="#CED0D6" stroke-width="2.1" stroke-linecap="round" stroke-linejoin="round" fill="#404247"/></g>
<g transform="translate(149 178) scale(1.0)"><rect x="15.4" y="17.4" width="15.5" height="15.5" rx="4.5" fill="#2B2D30"/><rect x="17.3" y="19.3" width="11.6" height="11.6" rx="3.2" fill="#213326" stroke="#6DDB8B" stroke-width="2.2"/></g>
<path d="M114.00 237.52 L122.00 246.48 L130.00 237.52" stroke="#CED0D6" stroke-width="2.2" stroke-linecap="round" stroke-linejoin="round" fill="none"/>
<g transform="translate(149 226) scale(1.0)"><path d="M1.2 7.2 C1.2 6 2 5.2 3.2 5.2 H10 C10.6 5.2 11 5.4 11.4 5.8 L14.2 9 H24.8 C26 9 26.8 9.8 26.8 11 V25 C26.8 26.2 26 27 24.8 27 H3.2 C2 27 1.2 26.2 1.2 25 Z" stroke="#CED0D6" stroke-width="2.1" stroke-linecap="round" stroke-linejoin="round" fill="#404247"/></g>
<g transform="translate(149 226) scale(1.0)"><path d="M13.5 19.5 H30 V32.5 H13.5 Z" fill="#2B2D30"/><path d="M15.4 22.5 H18.6 V30.6 H15.4 Z M18.6 30.6 V17.3 H23 V30.6 M23 21.8 H26.6 V30.6 H15.4" stroke="#6B9BFA" stroke-width="2.0" stroke-linecap="round" stroke-linejoin="round" fill="#22304D"/></g>
<path d="M155.80 282.50 L164.20 290.00 L155.80 297.50" stroke="#CED0D6" stroke-width="2.2" stroke-linecap="round" stroke-linejoin="round" fill="none"/>
<g transform="translate(187 274) scale(1.0)"><path d="M1.2 7.2 C1.2 6 2 5.2 3.2 5.2 H10 C10.6 5.2 11 5.4 11.4 5.8 L14.2 9 H24.8 C26 9 26.8 9.8 26.8 11 V25 C26.8 26.2 26 27 24.8 27 H3.2 C2 27 1.2 26.2 1.2 25 Z" stroke="#548AF7" stroke-width="2.1" stroke-linecap="round" stroke-linejoin="round" fill="#25324D"/></g>
<path d="M155.80 330.50 L164.20 338.00 L155.80 345.50" stroke="#CED0D6" stroke-width="2.2" stroke-linecap="round" stroke-linejoin="round" fill="none"/>
<g transform="translate(187 322) scale(1.0)"><path d="M1.2 7.2 C1.2 6 2 5.2 3.2 5.2 H10 C10.6 5.2 11 5.4 11.4 5.8 L14.2 9 H24.8 C26 9 26.8 9.8 26.8 11 V25 C26.8 26.2 26 27 24.8 27 H3.2 C2 27 1.2 26.2 1.2 25 Z" stroke="#548AF7" stroke-width="2.1" stroke-linecap="round" stroke-linejoin="round" fill="#25324D"/></g>
<path d="M152.00 381.52 L160.00 390.48 L168.00 381.52" stroke="#CED0D6" stroke-width="2.2" stroke-linecap="round" stroke-linejoin="round" fill="none"/>
<g transform="translate(187 370) scale(1.0)"><path d="M1.2 7.2 C1.2 6 2 5.2 3.2 5.2 H10 C10.6 5.2 11 5.4 11.4 5.8 L14.2 9 H24.8 C26 9 26.8 9.8 26.8 11 V25 C26.8 26.2 26 27 24.8 27 H3.2 C2 27 1.2 26.2 1.2 25 Z" stroke="#CED0D6" stroke-width="2.1" stroke-linecap="round" stroke-linejoin="round" fill="#404247"/></g>
<g transform="translate(187 370) scale(1.0)"><path d="M13.5 18.5 H32 V32 H13.5 Z" fill="#2B2D30"/><path d="M16.3 21.4 H30 M16.3 25 H30 M16.3 28.6 H30" stroke="#F2C55C" stroke-width="2.4" stroke-linecap="butt" stroke-linejoin="round" fill="none"/></g>
<path d="M190.00 429.52 L198.00 438.48 L206.00 429.52" stroke="#CED0D6" stroke-width="2.2" stroke-linecap="round" stroke-linejoin="round" fill="none"/>
<g transform="translate(225 418) scale(1.0)"><path d="M1.2 7.2 C1.2 6 2 5.2 3.2 5.2 H10 C10.6 5.2 11 5.4 11.4 5.8 L14.2 9 H24.8 C26 9 26.8 9.8 26.8 11 V25 C26.8 26.2 26 27 24.8 27 H3.2 C2 27 1.2 26.2 1.2 25 Z" stroke="#CED0D6" stroke-width="2.1" stroke-linecap="round" stroke-linejoin="round" fill="#404247"/></g>
<g transform="translate(225 418) scale(1.0)"><circle cx="10.2" cy="18.3" r="3" stroke="#CED0D6" stroke-width="2.0" fill="none"/></g>
<g transform="translate(263 466) scale(1.0)"><path d="M9.9 9.6 L1.2 16.4 L9.9 23.3 M19 4.3 L12.6 27.6 M21.9 9.6 L30.8 16.4 L21.9 23.3" stroke="#CC8656" stroke-width="2.3" stroke-linecap="round" stroke-linejoin="round" fill="none"/></g>
<path d="M117.80 522.50 L126.20 530.00 L117.80 537.50" stroke="#CED0D6" stroke-width="2.2" stroke-linecap="round" stroke-linejoin="round" fill="none"/>
<g transform="translate(147.6 513.2) scale(0.79)"><path d="M1.5 33.7 C1.2 26 3 19.5 7.4 15.5 C10 12 13.5 9.8 18 9.8 C22 9.8 25 11.8 28 13.5 C31 15 35 15.5 37.5 13 C39.5 10.5 38.5 6.3 34.5 6.3 C32 6.3 30.5 7.5 29.8 8.2 M38 12.5 C38.5 16.5 36.5 19.5 33.8 21.8 C31 24 28.8 27.5 28.1 33.7 H25.3 C24 31 22.5 30.1 20.2 30.1 C18 30.1 16 31 14.6 33.7 C13.2 31 11.5 30.1 9.1 30.1 C6.8 30.1 5.8 31.5 5.5 33.7 H1.5 M7.9 14.8 C8.5 18.5 9.5 23 12.7 23.3 C15 23.5 17.5 21 19.4 19.4" stroke="#CED0D6" stroke-width="2.75" stroke-linecap="round" stroke-linejoin="round" fill="none"/><circle cx="25" cy="18.6" r="2.0" fill="#CED0D6"/></g>
<g transform="translate(1029 103) scale(1.0)"><path d="M9.9 9.6 L1.2 16.4 L9.9 23.3 M19 4.3 L12.6 27.6 M21.9 9.6 L30.8 16.4 L21.9 23.3" stroke="#CC8656" stroke-width="2.3" stroke-linecap="round" stroke-linejoin="round" fill="none"/></g>
<path d="M1219.5 113.5 L1232.5 126.5 M1232.5 113.5 L1219.5 126.5" stroke="#7F838A" stroke-width="2.0" stroke-linecap="round" stroke-linejoin="round" fill="none"/>
<circle cx="3336" cy="110" r="2.1" fill="#CED0D6"/><circle cx="3336" cy="120" r="2.1" fill="#CED0D6"/><circle cx="3336" cy="130" r="2.1" fill="#CED0D6"/>
<path d="M3337.5 188.8 L3344 195 L3358 181.2" stroke="#6A9F6A" stroke-width="3.6" stroke-linecap="round" stroke-linejoin="round" fill="none"/>
<path d="M1218 287.5 L1220.5 289.8 L1225.5 285.2 L1230.5 289.8 L1235.5 285.2 L1240.5 289.8 L1245.5 285.2 L1250.5 289.8 L1255.5 285.2 L1260.5 289.8 L1265.5 285.2 L1270.5 289.8 L1275.5 285.2 L1280.5 289.8 L1285.5 285.2 L1290.5 289.8 L1295.5 285.2 L1300.5 289.8 L1305.5 285.2 L1310.5 289.8" stroke="#DE6A78" stroke-width="1.7" stroke-linecap="butt" stroke-linejoin="miter" fill="none"/>
<g transform="translate(3396 100) scale(1.0)"><path d="M24 2.6 H20.2 C13.8 2.6 9.6 7.2 9.6 13.5 V18.5 C9.6 21.5 8.2 24.5 4.6 29 C3.8 30 4.3 31 5.5 31 H35 C36.2 31 36.7 30 35.9 29 C32.5 24.7 30.8 21.5 30.8 18.5 V16.3" stroke="#CED0D6" stroke-width="2.5" stroke-linecap="round" stroke-linejoin="round" fill="none"/><path d="M15.8 34.5 H24.6 C24.2 36.6 22.4 37.8 20.2 37.8 C18 37.8 16.2 36.6 15.8 34.5 Z" fill="#CED0D6"/><circle cx="33" cy="6.7" r="7.3" fill="#548AF7"/></g>
<g transform="translate(3396 180) scale(1.0)"><path d="M1.5 33.7 C1.2 26 3 19.5 7.4 15.5 C10 12 13.5 9.8 18 9.8 C22 9.8 25 11.8 28 13.5 C31 15 35 15.5 37.5 13 C39.5 10.5 38.5 6.3 34.5 6.3 C32 6.3 30.5 7.5 29.8 8.2 M38 12.5 C38.5 16.5 36.5 19.5 33.8 21.8 C31 24 28.8 27.5 28.1 33.7 H25.3 C24 31 22.5 30.1 20.2 30.1 C18 30.1 16 31 14.6 33.7 C13.2 31 11.5 30.1 9.1 30.1 C6.8 30.1 5.8 31.5 5.5 33.7 H1.5 M7.9 14.8 C8.5 18.5 9.5 23 12.7 23.3 C15 23.5 17.5 21 19.4 19.4" stroke="#CED0D6" stroke-width="2.5" stroke-linecap="round" stroke-linejoin="round" fill="none"/><circle cx="25" cy="18.6" r="1.8" fill="#CED0D6"/></g>
<g transform="translate(3396 260) scale(1.0)"><path d="M11.5 34.4 H8 C6.3 34.4 4.9 33 4.9 31.3 V7.7 C4.9 6 6.3 4.6 8 4.6 H21.5 C23.2 4.6 24.6 6 24.6 7.7 V20.6 M12.9 11.1 H17.3 M14.6 36.6 C14.6 30 19.8 25.7 26 25.7 C32.3 25.7 37.6 30 37.6 36.6 Z M19.5 23.5 L21 26.4 M32.6 23.5 L31.1 26.4" stroke="#CED0D6" stroke-width="2.5" stroke-linecap="round" stroke-linejoin="round" fill="none"/></g>
<g transform="translate(3396 340) scale(1.0)"><path d="M10.7 34.4 H8 C6.3 34.4 4.9 33 4.9 31.3 V7.7 C4.9 6 6.3 4.6 8 4.6 H21.5 C23.2 4.6 24.6 6 24.6 7.7 V16.2 M12.9 11.5 H17.3 M15.1 36.6 H35.5" stroke="#CED0D6" stroke-width="2.5" stroke-linecap="round" stroke-linejoin="round" fill="none"/><rect x="15.1" y="21.3" width="20.4" height="9.4" rx="1.6" stroke="#CED0D6" stroke-width="2.5" fill="none"/></g>
<g transform="translate(3396 420) scale(1.0)"><path d="M20.2 3.1 C21 13 24.5 18.8 37.6 19.85 C24.5 21 21 26.5 20.2 36.6 C19.4 26.5 15.9 21 2.7 19.85 C15.9 18.8 19.4 13 20.2 3.1 Z" fill="#CED0D6"/></g>
<g transform="translate(3396 500) scale(1.0)"><circle cx="8.55" cy="6.8" r="3.8" stroke="#CED0D6" stroke-width="2.7" fill="none"/><circle cx="8.55" cy="19.9" r="3.8" stroke="#CED0D6" stroke-width="2.7" fill="none"/><circle cx="8.55" cy="33" r="3.8" stroke="#CED0D6" stroke-width="2.7" fill="none"/><path d="M18 6.8 H35.5 M18 19.9 H35.5 M18 33 H35.5" stroke="#CED0D6" stroke-width="2.8" stroke-linecap="round" stroke-linejoin="round" fill="none"/></g>
<path d="M1056.5 1421.5 L1069.5 1434.5 M1069.5 1421.5 L1056.5 1434.5" stroke="#7F838A" stroke-width="2.0" stroke-linecap="round" stroke-linejoin="round" fill="none"/>
<circle cx="3280" cy="1416" r="2.1" fill="#CED0D6"/><circle cx="3280" cy="1426" r="2.1" fill="#CED0D6"/><circle cx="3280" cy="1436" r="2.1" fill="#CED0D6"/>
<path d="M3320.5 1426 H3344" stroke="#CED0D6" stroke-width="2.2" stroke-linecap="round" stroke-linejoin="round" fill="none"/>
<path d="M126.7 1494.6 C124.8 1493.2 122.5 1492.6 120 1492.6 C113.5 1492.6 108.9 1497.5 108.9 1504 V1506.5 M104.3 1502.8 L108.9 1507.2 L113.5 1502.8 M113.5 1512.6 C115.3 1514.4 117.5 1515.2 120 1515.2 C126.5 1515.2 130.9 1510.5 130.9 1504 V1501 M126.3 1505.3 L130.9 1500.8 L135.5 1505.3" stroke="#CED0D6" stroke-width="2.3" stroke-linecap="round" stroke-linejoin="round" fill="none"/>
<path d="M119.7 1567.3 V1545 M111.5 1553.4 L119.7 1545 L128 1553.4" stroke="#5B5E63" stroke-width="2.3" stroke-linecap="round" stroke-linejoin="round" fill="none"/>
<path d="M119.7 1596.4 V1618.5 M111.5 1610.3 L119.7 1618.7 L128 1610.3" stroke="#CED0D6" stroke-width="2.3" stroke-linecap="round" stroke-linejoin="round" fill="none"/>
<path d="M120.1 1643.4 C125.6 1643.4 130 1647.8 130 1653.3 C130 1656.8 128.3 1659.3 126.2 1661.2 C125.3 1662 124.8 1663 124.8 1664.2 V1665.8 H115.4 V1664.2 C115.4 1663 114.9 1662 114 1661.2 C111.9 1659.3 110.2 1656.8 110.2 1653.3 C110.2 1647.8 114.6 1643.4 120.1 1643.4 Z" fill="#F2C55C"/><path d="M115.7 1669.2 H124.3 M116.5 1673.1 H123.5" stroke="#CED0D6" stroke-width="2.0" stroke-linecap="round" stroke-linejoin="round" fill="none"/>
<path d="M130.10 1725.90 L130.10 1726.35 L130.09 1726.79 L130.11 1727.24 L130.21 1727.72 L130.55 1728.26 L131.20 1728.93 L131.81 1729.66 L132.05 1730.32 L132.01 1730.92 L131.84 1731.47 L131.60 1731.99 L131.33 1732.50 L131.03 1732.99 L130.69 1733.45 L130.30 1733.88 L129.81 1734.21 L129.11 1734.34 L128.17 1734.17 L127.27 1733.94 L126.63 1733.92 L126.17 1734.07 L125.77 1734.28 L125.38 1734.51 L125.00 1734.73 L124.61 1734.95 L124.22 1735.17 L123.84 1735.41 L123.48 1735.74 L123.18 1736.30 L122.93 1737.20 L122.60 1738.10 L122.15 1738.63 L121.61 1738.89 L121.05 1739.02 L120.48 1739.08 L119.90 1739.10 L119.32 1739.08 L118.75 1739.02 L118.19 1738.89 L117.65 1738.63 L117.20 1738.10 L116.87 1737.20 L116.62 1736.30 L116.32 1735.74 L115.96 1735.41 L115.58 1735.17 L115.19 1734.95 L114.80 1734.73 L114.42 1734.51 L114.03 1734.28 L113.63 1734.07 L113.17 1733.92 L112.53 1733.94 L111.63 1734.17 L110.69 1734.34 L109.99 1734.21 L109.50 1733.88 L109.11 1733.45 L108.77 1732.99 L108.47 1732.50 L108.20 1731.99 L107.96 1731.47 L107.79 1730.92 L107.75 1730.32 L107.99 1729.66 L108.60 1728.93 L109.25 1728.26 L109.59 1727.72 L109.69 1727.24 L109.71 1726.79 L109.70 1726.35 L109.70 1725.90 L109.70 1725.45 L109.71 1725.01 L109.69 1724.56 L109.59 1724.08 L109.25 1723.54 L108.60 1722.87 L107.99 1722.14 L107.75 1721.48 L107.79 1720.88 L107.96 1720.33 L108.20 1719.81 L108.47 1719.30 L108.77 1718.81 L109.11 1718.35 L109.50 1717.92 L109.99 1717.59 L110.69 1717.46 L111.63 1717.63 L112.53 1717.86 L113.17 1717.88 L113.63 1717.73 L114.03 1717.52 L114.42 1717.29 L114.80 1717.07 L115.19 1716.85 L115.58 1716.63 L115.96 1716.39 L116.32 1716.06 L116.62 1715.50 L116.87 1714.60 L117.20 1713.70 L117.65 1713.17 L118.19 1712.91 L118.75 1712.78 L119.32 1712.72 L119.90 1712.70 L120.48 1712.72 L121.05 1712.78 L121.61 1712.91 L122.15 1713.17 L122.60 1713.70 L122.93 1714.60 L123.18 1715.50 L123.48 1716.06 L123.84 1716.39 L124.22 1716.63 L124.61 1716.85 L125.00 1717.07 L125.38 1717.29 L125.77 1717.52 L126.17 1717.73 L126.63 1717.88 L127.27 1717.86 L128.17 1717.63 L129.11 1717.46 L129.81 1717.59 L130.30 1717.92 L130.69 1718.35 L131.03 1718.81 L131.33 1719.30 L131.60 1719.81 L131.84 1720.33 L132.01 1720.88 L132.05 1721.48 L131.81 1722.14 L131.20 1722.87 L130.55 1723.54 L130.21 1724.08 L130.11 1724.56 L130.09 1725.01 L130.10 1725.45 L130.10 1725.90 Z" stroke="#CED0D6" stroke-width="2.3" stroke-linecap="round" stroke-linejoin="round" fill="none"/><circle cx="119.9" cy="1725.9" r="4.6" stroke="#CED0D6" stroke-width="2.3" fill="none"/>
<path d="M104.5 1777.6 C108 1771 113.5 1767.3 119.9 1767.3 C126.3 1767.3 131.8 1771 135.3 1777.6 C131.8 1784.2 126.3 1787.9 119.9 1787.9 C113.5 1787.9 108 1784.2 104.5 1777.6 Z" stroke="#CED0D6" stroke-width="2.3" stroke-linecap="round" stroke-linejoin="round" fill="none"/><circle cx="119.9" cy="1777.6" r="5.3" stroke="#CED0D6" stroke-width="2.3" fill="none"/><path d="M138.5 1787.5 V1796 H130 Z" fill="#CED0D6"/>
<path d="M112.2 1840.8 L119.9 1832.6 L128 1840.8 M112.2 1847.5 L119.9 1855.2 L128 1847.5" stroke="#CED0D6" stroke-width="2.3" stroke-linecap="round" stroke-linejoin="round" fill="none"/>
<path d="M112.2 1884.3 L119.9 1892.1 L128 1884.3 M112.2 1906.9 L119.9 1899.2 L128 1906.9" stroke="#CED0D6" stroke-width="2.3" stroke-linecap="round" stroke-linejoin="round" fill="none"/>
<path d="M108.9 1954.1 V1969.5 C108.9 1971.5 110 1972.9 112 1972.9 H127.1 M118.9 1963 L130.7 1951.3 M122.8 1950.9 H130.9 V1959.4" stroke="#CED0D6" stroke-width="2.3" stroke-linecap="round" stroke-linejoin="round" fill="none"/><path d="M137.8 1972 V1979.8 H130 Z" fill="#CED0D6"/>
<path d="M192.00 1495.52 L200.00 1504.48 L208.00 1495.52" stroke="#CED0D6" stroke-width="2.2" stroke-linecap="round" stroke-linejoin="round" fill="none"/>
<path d="M230.00 1543.52 L238.00 1552.48 L246.00 1543.52" stroke="#CED0D6" stroke-width="2.2" stroke-linecap="round" stroke-linejoin="round" fill="none"/>
<path d="M268.00 1591.52 L276.00 1600.48 L284.00 1591.52" stroke="#CED0D6" stroke-width="2.2" stroke-linecap="round" stroke-linejoin="round" fill="none"/>
<path d="M306.00 1639.52 L314.00 1648.48 L322.00 1639.52" stroke="#CED0D6" stroke-width="2.2" stroke-linecap="round" stroke-linejoin="round" fill="none"/>
<g transform="translate(339.5 1628) scale(1.0)"><path d="M9.9 9.6 L1.2 16.4 L9.9 23.3 M19 4.3 L12.6 27.6 M21.9 9.6 L30.8 16.4 L21.9 23.3" stroke="#CC8656" stroke-width="2.3" stroke-linecap="round" stroke-linejoin="round" fill="none"/></g>
<path d="M233.80 1780.50 L242.20 1788.00 L233.80 1795.50" stroke="#CED0D6" stroke-width="2.2" stroke-linecap="round" stroke-linejoin="round" fill="none"/>
<path d="M233.80 1828.50 L242.20 1836.00 L233.80 1843.50" stroke="#CED0D6" stroke-width="2.2" stroke-linecap="round" stroke-linejoin="round" fill="none"/>
<path d="M233.80 1876.50 L242.20 1884.00 L233.80 1891.50" stroke="#CED0D6" stroke-width="2.2" stroke-linecap="round" stroke-linejoin="round" fill="none"/>
<path d="M233.80 1924.50 L242.20 1932.00 L233.80 1939.50" stroke="#CED0D6" stroke-width="2.2" stroke-linecap="round" stroke-linejoin="round" fill="none"/>
<path d="M233.80 1972.50 L242.20 1980.00 L233.80 1987.50" stroke="#CED0D6" stroke-width="2.2" stroke-linecap="round" stroke-linejoin="round" fill="none"/>
<path d="M233.80 2020.50 L242.20 2028.00 L233.80 2035.50" stroke="#CED0D6" stroke-width="2.2" stroke-linecap="round" stroke-linejoin="round" fill="none"/>
<path d="M233.80 2068.50 L242.20 2076.00 L233.80 2083.50" stroke="#CED0D6" stroke-width="2.2" stroke-linecap="round" stroke-linejoin="round" fill="none"/>
<g transform="translate(0 2) scale(1.0)"><path d="M2009.5 1513 C2014.6 1513 2018.5 1516.9 2018.5 1522 C2018.5 1525 2017 1527.2 2015.2 1528.9 C2014.4 1529.6 2014 1530.5 2014 1531.5 V1533 H2005 V1531.5 C2005 1530.5 2004.6 1529.6 2003.8 1528.9 C2002 1527.2 2000.5 1525 2000.5 1522 C2000.5 1516.9 2004.4 1513 2009.5 1513 Z" fill="#C4A45E"/><path d="M2005.5 1536.5 H2013.5 M2006.5 1540 H2012.5" stroke="#CED0D6" stroke-width="1.8" stroke-linecap="round" stroke-linejoin="round" fill="none"/></g>
<path d="M2419.5 1526.5 H2437.5 L2428.5 1535.5 Z" fill="#9A9DA3"/>
<path d="M1938 1717.5 L1940.5 1719.8 L1945.5 1715.2 L1950.5 1719.8 L1955.5 1715.2 L1960.5 1719.8 L1965.5 1715.2 L1970.5 1719.8 L1975.5 1715.2 L1980.5 1719.8 L1985.5 1715.2 L1990.5 1719.8 L1995.5 1715.2 L2000.5 1719.8 L2005.5 1715.2 L2010.5 1719.8 L2015.5 1715.2 L2020.5 1719.8 L2025.5 1715.2 L2030.5 1719.8" stroke="#DE6A78" stroke-width="1.7" stroke-linecap="butt" stroke-linejoin="miter" fill="none"/>
<rect x="28" y="2118" width="15" height="15" rx="3.5" stroke="#6B9BFA" stroke-width="2.2" fill="#25324D"/>
<path d="M173.64 2119.00 L180.36 2125.00 L173.64 2131.00" stroke="#A8ABB0" stroke-width="2.0" stroke-linecap="round" stroke-linejoin="round" fill="none"/>
<rect x="202" y="2118" width="15" height="15" rx="3.5" stroke="#6B9BFA" stroke-width="2.2" fill="#25324D"/>
<path d="M362.64 2119.00 L369.36 2125.00 L362.64 2131.00" stroke="#A8ABB0" stroke-width="2.0" stroke-linecap="round" stroke-linejoin="round" fill="none"/>
<path d="M448.64 2119.00 L455.36 2125.00 L448.64 2131.00" stroke="#A8ABB0" stroke-width="2.0" stroke-linecap="round" stroke-linejoin="round" fill="none"/>
<rect x="476" y="2118" width="15" height="15" rx="3.5" stroke="#6B9BFA" stroke-width="2.2" fill="#25324D"/>
<path d="M580.64 2119.00 L587.36 2125.00 L580.64 2131.00" stroke="#A8ABB0" stroke-width="2.0" stroke-linecap="round" stroke-linejoin="round" fill="none"/>
<path d="M668.64 2119.00 L675.36 2125.00 L668.64 2131.00" stroke="#A8ABB0" stroke-width="2.0" stroke-linecap="round" stroke-linejoin="round" fill="none"/>
<path d="M796.64 2119.00 L803.36 2125.00 L796.64 2131.00" stroke="#A8ABB0" stroke-width="2.0" stroke-linecap="round" stroke-linejoin="round" fill="none"/>
<g transform="translate(823 2109) scale(1.0)"><path d="M9.9 9.6 L1.2 16.4 L9.9 23.3 M19 4.3 L12.6 27.6 M21.9 9.6 L30.8 16.4 L21.9 23.3" stroke="#CC8656" stroke-width="2.3" stroke-linecap="round" stroke-linejoin="round" fill="none"/></g>
<path d="M3184 2113.5 C3184 2112.6 3184.6 2112 3185.5 2112 H3207.5 C3208.4 2112 3209 2112.6 3209 2113.5 V2131.5 C3209 2132.4 3208.4 2133 3207.5 2133 H3202 L3208 2138.5 L3197 2133 H3185.5 C3184.6 2133 3184 2132.4 3184 2131.5 Z M3196.5 2116.5 V2124" stroke="#CED0D6" stroke-width="2.0" stroke-linecap="round" stroke-linejoin="round" fill="none"/><circle cx="3196.5" cy="2128.3" r="1.3" fill="#CED0D6"/>
<path d="M3395 2124 C3395 2123 3395.8 2122.2 3396.8 2122.2 H3409.5 C3410.5 2122.2 3411.3 2123 3411.3 2124 V2136 C3411.3 2137 3410.5 2137.8 3409.5 2137.8 H3396.8 C3395.8 2137.8 3395 2137 3395 2136 Z M3405.5 2122.2 V2116 C3405.5 2112.5 3408.3 2110.5 3411.5 2110.5 C3414.7 2110.5 3417.5 2112.5 3417.5 2116 V2119 M3401.5 2127 V2133" stroke="#CED0D6" stroke-width="2.0" stroke-linecap="round" stroke-linejoin="round" fill="none"/>
</svg>
<div class="r" style="left:0;top:0;width:3455px;height:2156px;box-sizing:border-box;border:2px solid #5C5E62;border-top:0;border-radius:20px;"></div>
</div>
</body></html>
